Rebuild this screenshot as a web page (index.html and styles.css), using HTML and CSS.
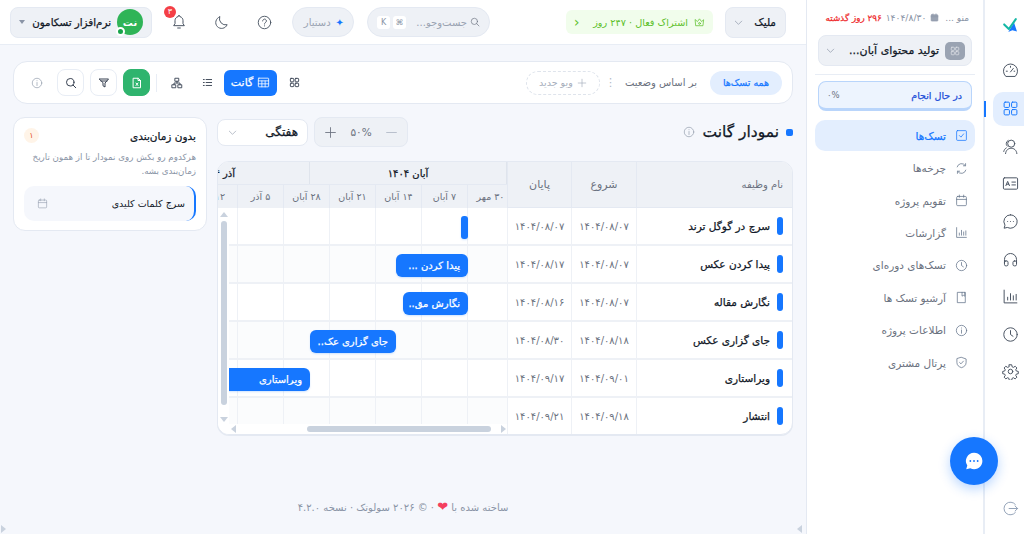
FILE: index.html
```html
<!DOCTYPE html>
<html lang="fa" dir="rtl">
<head>
<meta charset="utf-8">
<title>نمودار گانت</title>
<link rel="stylesheet" href="styles.css">
</head>
<body>
<svg class="defs" width="0" height="0" aria-hidden="true">
  <symbol id="i-grid" viewBox="0 0 24 24"><rect x="3" y="3" width="7.5" height="7.5" rx="1.5"/><rect x="13.5" y="3" width="7.5" height="7.5" rx="1.5"/><rect x="3" y="13.5" width="7.5" height="7.5" rx="1.5"/><rect x="13.5" y="13.5" width="7.5" height="7.5" rx="1.5"/></symbol>
  <symbol id="i-gauge" viewBox="0 0 24 24"><path d="M5 20a10 10 0 1 1 14 0z"/><path d="M12 14l4-5M6 13h1.500M17 13h1M12 6v1.500"/></symbol>
  <symbol id="i-users" viewBox="0 0 24 24"><circle cx="13" cy="8" r="5"/><path d="M5 22c.5-5 4-7.500 8-7.500s7.500 2.500 8 7.500M8.500 3.500A5 5 0 0 0 6 8c0 1.500.5 2.500 1.500 3.500M6 14c-2 1-3 3-3.500 5"/></symbol>
  <symbol id="i-id" viewBox="0 0 24 24"><rect x="2" y="4" width="20" height="16" rx="1.500"/><path d="M5.500 15l2.500-6 2.500 6M6.500 13h3M14 10h5M14 14h5"/></symbol>
  <symbol id="i-chat" viewBox="0 0 24 24"><path d="M12 2.500a9.500 9.500 0 1 1-4.500 17.900L3 21.500l1.200-4.300A9.500 9.500 0 0 1 12 2.500z"/><path d="M8 12h.01M12 12h.01M16 12h.01"/></symbol>
  <symbol id="i-headset" viewBox="0 0 24 24"><path d="M3.500 17v-5a8.500 8.500 0 0 1 17 0v5"/><rect x="3.500" y="14" width="5" height="7" rx="2"/><rect x="15.500" y="14" width="5" height="7" rx="2"/></symbol>
  <symbol id="i-chart" viewBox="0 0 24 24"><path d="M3 3v18h18M8 17v-4M12 17V8M16 17v-6M20 17V9"/></symbol>
  <symbol id="i-clock" viewBox="0 0 24 24"><circle cx="12" cy="12" r="9.500"/><path d="M12 6.500V12l3.500 2.500"/></symbol>
  <symbol id="i-gear" viewBox="0 0 24 24"><circle cx="12" cy="12" r="3.200"/><path d="M10.300 2.500h3.400l.6 2.900 1.800.8 2.500-1.600 2.400 2.400-1.600 2.500.8 1.800 2.800.6v3.200l-2.800.6-.8 1.800 1.600 2.500-2.400 2.400-2.500-1.600-1.800.8-.6 2.800h-3.400l-.6-2.800-1.800-.8-2.500 1.600-2.400-2.400 1.600-2.500-.8-1.800-2.800-.6v-3.200l2.800-.6.8-1.800-1.600-2.500 2.400-2.400 2.500 1.600 1.800-.8z"/></symbol>
  <symbol id="i-logout" viewBox="0 0 24 24"><path d="M19 6.500A9 9 0 1 0 19 17.500M10 12h12M18.500 8.500L22 12l-3.500 3.500"/></symbol>
  <symbol id="i-check" viewBox="0 0 24 24"><rect x="3" y="3" width="18" height="18" rx="1.500"/><path d="M8 12l3 3 5-6"/></symbol>
  <symbol id="i-cycle" viewBox="0 0 24 24"><path d="M4 9a8.500 8.500 0 0 1 15-2.500M20 15a8.500 8.500 0 0 1-15 2.500M19.500 3v4h-4M4.500 21v-4h4"/></symbol>
  <symbol id="i-cal" viewBox="0 0 24 24"><rect x="3" y="4.500" width="18" height="17" rx="2"/><path d="M3 10h18M8 2v4M16 2v4"/></symbol>
  <symbol id="i-book" viewBox="0 0 24 24"><path d="M5 2.500h14v19H5zM13 2.500v7l2.500-1.500L18 9.500v-7"/></symbol>
  <symbol id="i-info" viewBox="0 0 24 24"><circle cx="12" cy="12" r="9.500"/><path d="M12 11v6M12 7.300v.2"/></symbol>
  <symbol id="i-shield" viewBox="0 0 24 24"><path d="M12 2.500l8.500 3v6.500c0 5-3.500 8-8.500 9.500-5-1.500-8.500-4.500-8.500-9.500V5.500z"/><path d="M8.500 12l2.500 2.500 4.500-5"/></symbol>
  <symbol id="i-chev" viewBox="0 0 24 24"><path d="M5 9l7 7 7-7"/></symbol>
  <symbol id="i-crown" viewBox="0 0 24 24"><path d="M3 6l4.500 4L12 4l4.500 6L21 6l-1.500 13h-15z"/><circle cx="12" cy="14" r="2"/></symbol>
  <symbol id="i-search" viewBox="0 0 24 24"><circle cx="10.500" cy="10.500" r="7.500"/><path d="M16 16l5.500 5.500"/></symbol>
  <symbol id="i-help" viewBox="0 0 24 24"><circle cx="12" cy="12" r="10"/><path d="M9 9.500a3 3 0 1 1 4.500 2.600c-1 .6-1.500 1.200-1.500 2.400M12 17.300v.2"/></symbol>
  <symbol id="i-moon" viewBox="0 0 24 24"><path d="M9 3a9.500 9.500 0 1 0 12 12.500A10 10 0 0 1 9 3z"/></symbol>
  <symbol id="i-bell" viewBox="0 0 24 24"><path d="M12 2.500a1.500 1.500 0 0 1 1.500 1.500c3 .7 4.500 3.200 4.500 6v4.500l2 3H4l2-3V10c0-2.800 1.500-5.300 4.500-6A1.500 1.500 0 0 1 12 2.500zM10 21h4"/></symbol>
  <symbol id="i-filter" viewBox="0 0 24 24"><path d="M3 4h18l-7 8v8l-4-2.500V12zM6 8h12"/></symbol>
  <symbol id="i-file" viewBox="0 0 24 24"><path d="M5 2.500h9.500L19 7v14.500H5zM14 2.500V7h5M10 12l4 5M14 12l-4 5"/></symbol>
  <symbol id="i-tree" viewBox="0 0 24 24"><rect x="8.500" y="2.500" width="7" height="6"/><rect x="2.500" y="15.500" width="7" height="6"/><rect x="14.500" y="15.500" width="7" height="6"/><path d="M12 8.500V12M6 15.500V12h12v3.500"/></symbol>
  <symbol id="i-list" viewBox="0 0 24 24"><path d="M9 5.500h12M9 12h12M9 18.500h12M3 5.500h2M3 12h2M3 18.500h2"/></symbol>
  <symbol id="i-table" viewBox="0 0 24 24"><rect x="2.500" y="4" width="19" height="16" rx="1"/><path d="M2.500 9h19M2.500 14.500h19M9 9v11M15 9v11"/></symbol>
  <symbol id="i-plus" viewBox="0 0 24 24"><path d="M12 3v18M3 12h18"/></symbol>
  <symbol id="i-minus" viewBox="0 0 24 24"><path d="M3 12h18"/></symbol>
</svg>

<nav class="rail">
  <svg class="logo" viewBox="0 0 24 24" aria-hidden="true"><path class="logo-b" d="M9 24l10-16 5 15-8-2z"/><path class="logo-a" d="M2 11l8 8L22 2"/></svg>
  <a class="rail-btn"><svg class="ic"><use href="#i-gauge"/></svg></a>
  <a class="rail-btn rail-active"><svg class="ic"><use href="#i-grid"/></svg></a>
  <a class="rail-btn"><svg class="ic"><use href="#i-users"/></svg></a>
  <a class="rail-btn"><svg class="ic"><use href="#i-id"/></svg></a>
  <a class="rail-btn"><svg class="ic"><use href="#i-chat"/></svg></a>
  <a class="rail-btn"><svg class="ic"><use href="#i-headset"/></svg></a>
  <a class="rail-btn"><svg class="ic"><use href="#i-chart"/></svg></a>
  <a class="rail-btn"><svg class="ic"><use href="#i-clock"/></svg></a>
  <a class="rail-btn"><svg class="ic"><use href="#i-gear"/></svg></a>
  <a class="rail-btn rail-logout"><svg class="ic"><use href="#i-logout"/></svg></a>
</nav>

<aside class="sidebar">
  <div class="side-top">
    <span class="side-menu">منو ...</span>
    <svg class="ic ic-date"><use href="#i-cal"/></svg>
    <span class="side-date">۱۴۰۴/۸/۳۰</span>
    <span class="side-late">۲۹۶ روز گذشته</span>
  </div>
  <div class="project">
    <span class="project-icon"><svg class="ic"><use href="#i-grid"/></svg></span>
    <span class="project-name">تولید محتوای آبان...</span>
    <svg class="ic ic-chev"><use href="#i-chev"/></svg>
  </div>
  <hr class="side-rule">
  <div class="status"><span>در حال انجام</span><span class="status-pct">۰%</span></div>
  <ul class="menu">
    <li class="menu-item menu-active"><svg class="ic"><use href="#i-check"/></svg>تسک‌ها</li>
    <li class="menu-item"><svg class="ic"><use href="#i-cycle"/></svg>چرخه‌ها</li>
    <li class="menu-item"><svg class="ic"><use href="#i-cal"/></svg>تقویم پروژه</li>
    <li class="menu-item"><svg class="ic"><use href="#i-chart"/></svg>گزارشات</li>
    <li class="menu-item"><svg class="ic"><use href="#i-clock"/></svg>تسک‌های دوره‌ای</li>
    <li class="menu-item"><svg class="ic"><use href="#i-book"/></svg>آرشیو تسک ها</li>
    <li class="menu-item"><svg class="ic"><use href="#i-info"/></svg>اطلاعات پروژه</li>
    <li class="menu-item"><svg class="ic"><use href="#i-shield"/></svg>پرتال مشتری</li>
  </ul>
</aside>

<button class="fab" aria-label="گفتگو"><svg viewBox="0 0 24 24" aria-hidden="true"><path class="fab-bubble" d="M12 3a9 9 0 1 1-4 17l-4.500 1 1.200-4A9 9 0 0 1 12 3z"/><path class="fab-dots" d="M8 12h.01M12 12h.01M16 12h.01"/></svg></button>

<main class="main">
  <header class="topbar">
    <div class="top-group">
      <div class="workspace">ملیک<svg class="ic ic-chev"><use href="#i-chev"/></svg></div>
      <div class="sub">
        <svg class="ic"><use href="#i-crown"/></svg>
        <span>اشتراک فعال · ۲۴۷ روز</span>
        <span class="sub-arrow">›</span>
      </div>
    </div>
    <div class="top-group top-left">
      <div class="search">
        <svg class="ic"><use href="#i-search"/></svg>
        <span class="search-text">جست‌وجو...</span>
        <kbd class="key">⌘</kbd><kbd class="key">K</kbd>
      </div>
      <div class="assistant"><span class="spark">✦</span>دستیار</div>
      <svg class="ic top-icon"><use href="#i-help"/></svg>
      <svg class="ic top-icon"><use href="#i-moon"/></svg>
      <div class="bell"><svg class="ic top-icon"><use href="#i-bell"/></svg><span class="bell-badge">۳</span></div>
      <div class="profile">
        <span class="avatar">نت<i class="avatar-dot"></i></span>
        <span class="profile-name">نرم‌افزار تسکامون</span>
        <span class="caret"></span>
      </div>
    </div>
  </header>

  <section class="content">
    <div class="toolbar">
      <div class="tool-group">
        <span class="pill-active">همه تسک‌ها</span>
        <span class="tool-label">بر اساس وضعیت</span>
        <span class="kebab">⋮</span>
        <span class="pill-new"><svg class="ic"><use href="#i-plus"/></svg>ویو جدید</span>
      </div>
      <div class="tool-group tool-views">
        <svg class="ic view"><use href="#i-grid"/></svg>
        <span class="view-active"><svg class="ic"><use href="#i-table"/></svg>گانت</span>
        <svg class="ic view"><use href="#i-list"/></svg>
        <svg class="ic view"><use href="#i-tree"/></svg>
        <i class="tool-sep"></i>
        <span class="tool-btn tool-green"><svg class="ic"><use href="#i-file"/></svg></span>
        <span class="tool-btn"><svg class="ic"><use href="#i-filter"/></svg></span>
        <span class="tool-btn"><svg class="ic"><use href="#i-search"/></svg></span>
        <svg class="ic tool-info"><use href="#i-info"/></svg>
      </div>
    </div>

    <div class="work">
      <div class="gantt-col">
        <div class="title-row">
          <div class="title"><i class="title-mark"></i><h1>نمودار گانت</h1><svg class="ic"><use href="#i-info"/></svg></div>
          <div class="controls">
            <div class="zoom-ctl"><svg class="ic"><use href="#i-minus"/></svg><span>۵۰%</span><svg class="ic"><use href="#i-plus"/></svg></div>
            <div class="select"><span>هفتگی</span><svg class="ic"><use href="#i-chev"/></svg></div>
          </div>
        </div>

        <div class="gantt">
          <div class="cols">
            <div class="row head"><div class="name">نام وظیفه</div><div class="date">شروع</div><div class="date">پایان</div></div>
            <div class="row"><div class="name"><i class="mark"></i>سرچ در گوگل ترند</div><div class="date">۱۴۰۴/۰۸/۰۷</div><div class="date">۱۴۰۴/۰۸/۰۷</div></div>
            <div class="row"><div class="name"><i class="mark"></i>پیدا کردن عکس</div><div class="date">۱۴۰۴/۰۸/۰۷</div><div class="date">۱۴۰۴/۰۸/۱۷</div></div>
            <div class="row"><div class="name"><i class="mark"></i>نگارش مقاله</div><div class="date">۱۴۰۴/۰۸/۰۷</div><div class="date">۱۴۰۴/۰۸/۱۶</div></div>
            <div class="row"><div class="name"><i class="mark"></i>جای گزاری عکس</div><div class="date">۱۴۰۴/۰۸/۱۸</div><div class="date">۱۴۰۴/۰۸/۳۰</div></div>
            <div class="row"><div class="name"><i class="mark"></i>ویراستاری</div><div class="date">۱۴۰۴/۰۹/۰۱</div><div class="date">۱۴۰۴/۰۹/۱۷</div></div>
            <div class="row row-last"><div class="name"><i class="mark"></i>انتشار</div><div class="date">۱۴۰۴/۰۹/۱۸</div><div class="date">۱۴۰۴/۰۹/۲۱</div></div>
          </div>
          <div class="timeline">
            <div class="months">
              <div class="month month-aban">آبان ۱۴۰۴</div>
              <div class="month month-azar">آذر ۱۴۰۴</div>
            </div>
            <div class="weeks tl-grid">
              <div class="week-first">۳۰ مهر</div><div>۷ آبان</div><div>۱۴ آبان</div><div>۲۱ آبان</div><div>۲۸ آبان</div><div>۵ آذر</div><div class="week-clip">۱۲ آذر</div>
            </div>
            <div class="tl-row tl-grid"><i></i><i></i><i></i><i></i><i></i><i></i><i></i><span class="bar bar-dot" style="right:39px;width:7px"></span></div>
            <div class="tl-row tl-grid tl-alt"><i></i><i></i><i></i><i></i><i></i><i></i><i></i><span class="bar" style="right:39px;width:72px">پیدا کردن ...</span></div>
            <div class="tl-row tl-grid"><i></i><i></i><i></i><i></i><i></i><i></i><i></i><span class="bar" style="right:39px;width:65px">نگارش مق..</span></div>
            <div class="tl-row tl-grid tl-alt"><i></i><i></i><i></i><i></i><i></i><i></i><i></i><span class="bar" style="right:111px;width:86px">جای گزاری عک..</span></div>
            <div class="tl-row tl-grid"><i></i><i></i><i></i><i></i><i></i><i></i><i></i><span class="bar bar-open" style="right:197px;width:82px">ویراستاری</span></div>
            <div class="tl-row tl-grid tl-alt tl-last"><i></i><i></i><i></i><i></i><i></i><i></i><i></i></div>
            <div class="vbar"><b class="arr arr-up"></b><i class="vthumb"></i><b class="arr arr-down"></b></div>
            <div class="hbar"><b class="arr arr-end"></b><i class="hthumb"></i><b class="arr arr-start"></b></div>
          </div>
        </div>
      </div>

      <aside class="panel">
        <div class="panel-head"><strong>بدون زمان‌بندی</strong><span class="panel-count">۱</span></div>
        <p class="panel-text">هرکدوم رو بکش روی نمودار تا از همون تاریخ زمان‌بندی بشه.</p>
        <div class="panel-item"><span>سرچ کلمات کلیدی</span><svg class="ic"><use href="#i-cal"/></svg></div>
      </aside>
    </div>

    <footer class="foot">ساخته شده با <span class="heart">❤</span> · © ۲۰۲۶ سولوتک · نسخه ۴.۲.۰</footer>
  </section>
  <b class="page-arrow page-arrow-r"></b>
  <b class="page-arrow page-arrow-l"></b>
</main>
</body>
</html>
```
FILE: styles.css
```css
* { box-sizing: border-box; }
html, body { height: 100%; }
body {
  margin: 0;
  height: 534px;
  overflow: hidden;
  display: flex;
  background: #f5f7fc;
  color: #111827;
  font-family: "DejaVu Sans", sans-serif;
  font-size: 11px;
}
.defs { position: absolute; }
.ic {
  width: 16px;
  height: 16px;
  flex: none;
  fill: none;
  stroke: currentColor;
  stroke-width: 1.6;
  stroke-linecap: round;
  stroke-linejoin: round;
}

/* semi-bold look: the installed Arabic face only has regular and a very heavy bold */
.project, .workspace, .profile-name, .pill-active, .view-active, .title h1, .select,
.row .name, .month, .bar, .panel-head strong, .status, .menu-active, .side-late {
  font-weight: 400;
  -webkit-text-stroke: .25px currentColor;
}

/* rail */
.rail {
  width: 41px;
  flex: none;
  background: #fff;
  border-left: 2px solid #e8edf5;
  display: flex;
  flex-direction: column;
  align-items: flex-start;
  position: relative;
}
.logo { width: 14px; height: 14px; margin: 18px 7px 0 0; flex: none; overflow: visible; }
.logo-a { fill: none; stroke: #14b8a6; stroke-width: 3.5; stroke-linecap: round; stroke-linejoin: round; }
.logo-b { fill: #1677ff; }
.rail-btn {
  width: 31px;
  height: 37.600px;
  display: flex;
  align-items: center;
  justify-content: center;
  color: #4b5563;
  padding-left: 3px;
}
.rail-btn:nth-of-type(1) { margin-top: 20px; }
.rail-btn .ic { width: 17px; height: 17px; stroke-width: 1.4; }
.rail-active {
  background: #e3eefe;
  color: #1677ff;
  border-radius: 10px 0 0 10px;
  position: relative;
  height: 34px;
  margin: 2px 0;
}
.rail-active::after {
  content: "";
  position: absolute;
  right: 38px;
  top: 9px;
  width: 2px;
  height: 16px;
  background: #1677ff;
}
.rail-logout { margin-top: auto; margin-bottom: 7px; color: #94a3b8; }

/* sidebar */
.sidebar {
  width: 177px;
  flex: none;
  background: #fff;
  border-left: 1px solid #e4e9f2;
  padding: 0 8px;
  display: flex;
  flex-direction: column;
}
.side-top {
  height: 35px;
  display: flex;
  align-items: center;
  gap: 4px;
  padding: 0 6px 0 0;
  font-size: 8.500px;
  color: #8a94a6;
  white-space: nowrap;
}
.side-menu { font-size: 9px; }
.ic-date { width: 9px; height: 9px; margin-right: 2px; fill: #9aa3b2; }
.side-late { color: #ef2b2d; font-size: 8.800px; }
.side-date { font-size: 9.200px; }
.project {
  height: 31px;
  margin: 0 3px;
  display: flex;
  align-items: center;
  gap: 6px;
  padding: 0 6px;
  background: #eef1f6;
  border: 1px solid #e4e9f2;
  border-radius: 8px;
  font-size: 11px;
  white-space: nowrap;
}
.project-icon {
  width: 20px;
  height: 18px;
  background: #9aa3b2;
  border-radius: 5px;
  color: #e5e7eb;
  display: grid;
  place-items: center;
}
.project-icon .ic { width: 10px; height: 10px; }
.project-name { flex: 1; }
.ic-chev { width: 11px; height: 11px; color: #8a94a6; stroke-width: 1.5; }
.side-rule { border: 0; border-top: 1px solid #e8edf5; margin: 8px 0 6px; width: 100%; }
.status {
  height: 30px;
  margin: 0 3px;
  padding: 0 9px 0 8px;
  display: flex;
  justify-content: space-between;
  align-items: center;
  background: #edf4fe;
  border: 1px solid #b9d5fb;
  border-bottom: 3px solid #b9d5fb;
  border-radius: 8px;
  color: #1d4ed8;
  font-size: 9.500px;
}
.status-pct { color: #6b7280; font-size: 8.500px; -webkit-text-stroke: 0; }
.menu { list-style: none; margin: 9px 0 0; padding: 0; }
.menu-item {
  height: 32.400px;
  display: flex;
  align-items: center;
  gap: 9px;
  padding: 0 7px;
  color: #6b7280;
  font-size: 10.500px;
  border-radius: 10px;
  white-space: nowrap;
}
.menu-item .ic { width: 13px; height: 13px; stroke-width: 1.4; color: #64748b; }
.menu-active { background: #e3eefe; color: #1677ff; height: 31px; margin-bottom: 1px; }
.menu-active .ic { color: #1677ff; }

.fab {
  position: absolute;
  left: 950px;
  top: 437px;
  width: 48px;
  height: 48px;
  padding: 13px;
  border: 0;
  border-radius: 50%;
  background: #1677ff;
  box-shadow: 0 4px 12px rgba(22, 119, 255, .3);
}
.fab svg { display: block; width: 22px; height: 22px; }
.fab-bubble { fill: #fff; }
.fab-dots { fill: none; stroke: #1677ff; stroke-width: 2; stroke-linecap: round; }

/* main */
.main { flex: 1; min-width: 0; display: flex; flex-direction: column; position: relative; }
.topbar {
  height: 45px;
  flex: none;
  background: #fff;
  border-bottom: 1px solid #e8edf5;
  padding: 0 20px 0 10px;
  display: flex;
  justify-content: space-between;
  align-items: center;
}
.top-group { display: flex; align-items: center; gap: 12px; }
.workspace {
  width: 61px;
  height: 31px;
  display: flex;
  align-items: center;
  justify-content: space-between;
  padding: 0 9px 0 7px;
  background: #eef1f6;
  border: 1px solid #e4e9f2;
  border-radius: 8px;
  font-size: 10.500px;
}
.sub {
  width: 147px;
  height: 24px;
  display: flex;
  align-items: center;
  gap: 6px;
  padding: 0 8px;
  background: #f1fdec;
  border-radius: 6px;
  color: #5cc02a;
  font-size: 9.700px;
  white-space: nowrap;
}
.sub .ic { width: 11px; height: 11px; }
.sub-arrow { margin-right: auto; font-size: 14px; line-height: 1; transform: scaleX(-1); }
.top-left { gap: 0; }
.search {
  width: 123px;
  height: 30px;
  display: flex;
  align-items: center;
  gap: 3px;
  padding: 0 9px;
  background: #eef1f6;
  border: 1px solid #e4e9f2;
  border-radius: 15px;
  color: #9aa3b2;
  font-size: 10px;
  white-space: nowrap;
}
.search .ic { width: 10px; height: 10px; color: #6b7280; }
.search-text { flex: 1; }
.key {
  width: 13px;
  height: 13px;
  display: grid;
  place-items: center;
  background: #fff;
  border-radius: 3px;
  font: 8px "DejaVu Sans", sans-serif;
  color: #8a94a6;
}
.assistant {
  width: 62px;
  height: 30px;
  margin-right: 13px;
  display: flex;
  align-items: center;
  gap: 5px;
  padding: 0 9px;
  background: #eef1f6;
  border: 1px solid #e4e9f2;
  border-radius: 15px;
  color: #9aa3b2;
  font-size: 10px;
}
.spark { color: #1677ff; font-size: 10px; }
.top-icon { width: 15px; height: 15px; color: #4b5563; stroke-width: 1.5; }
.assistant + .top-icon { margin-right: 20px; }
.top-icon + .top-icon { margin-right: 28px; }
.bell { position: relative; margin-right: 27px; height: 16px; }
.bell .top-icon { width: 16px; height: 16px; display: block; }
.bell-badge {
  position: absolute;
  right: 11px;
  top: -8px;
  width: 12px;
  height: 12px;
  border-radius: 50%;
  background: #f43f46;
  color: #fff;
  font-size: 8px;
  line-height: 12px;
  text-align: center;
}
.profile {
  width: 142px;
  height: 31px;
  margin-right: 19px;
  display: flex;
  align-items: center;
  gap: 6px;
  padding: 0 8px 0 8px;
  background: #eef1f6;
  border: 1px solid #e4e9f2;
  border-radius: 8px;
  white-space: nowrap;
}
.avatar {
  width: 26px;
  height: 26px;
  border-radius: 50%;
  background: #2fb457;
  color: #fff;
  font-size: 10px;
  font-weight: 700;
  display: grid;
  place-items: center;
  position: relative;
  flex: none;
}
.avatar-dot {
  position: absolute;
  left: -1px;
  bottom: -1px;
  width: 9px;
  height: 9px;
  border-radius: 50%;
  background: #16a34a;
  border: 2px solid #fff;
}
.profile-name { flex: 1; font-size: 10.300px; }
.caret { width: 0; height: 0; border: 3px solid transparent; border-top: 4px solid #8a94a6; border-bottom: 0; }

.content { flex: 1; padding: 16px 13px 0; display: flex; flex-direction: column; }
.toolbar {
  height: 43px;
  flex: none;
  display: flex;
  justify-content: space-between;
  align-items: center;
  padding: 0 10px 0 17px;
  background: #fff;
  border: 1px solid #e4e9f2;
  border-radius: 14px;
}
.tool-group { display: flex; align-items: center; }
.pill-active {
  width: 72px;
  height: 24px;
  border-radius: 12px;
  background: #e3eefe;
  color: #1677ff;
  font-size: 9.500px;
  display: grid;
  place-items: center;
  white-space: nowrap;
}
.tool-label { margin-right: 13px; color: #6b7280; font-size: 10px; white-space: nowrap; }
.kebab { margin: 0 9px 0 5px; color: #b0b8c6; font-size: 11px; }
.pill-new {
  width: 74px;
  height: 24px;
  display: flex;
  align-items: center;
  justify-content: center;
  gap: 4px;
  border: 1px dashed #dfe4ec;
  border-radius: 12px;
  color: #a5adbb;
  font-size: 9.500px;
  white-space: nowrap;
}
.pill-new .ic { width: 10px; height: 10px; }
.view { width: 11px; height: 11px; color: #374151; stroke-width: 2; }
.view-active {
  width: 53px;
  height: 26px;
  margin: 0 12px 0 11px;
  display: flex;
  align-items: center;
  justify-content: center;
  gap: 4px;
  background: #1677ff;
  color: #fff;
  border-radius: 6px;
  font-size: 11px;
}
.view-active .ic { width: 13px; height: 13px; stroke-width: 1.5; -webkit-text-stroke: 0; }
.view + .view { margin-right: 19px; width: 12px; height: 12px; stroke-width: 1.8; }
.tool-sep { width: 1px; height: 18px; margin: 0 14px 0 6px; background: #e8edf5; }
.tool-btn {
  width: 27px;
  height: 27px;
  margin-left: 6px;
  display: grid;
  place-items: center;
  background: #fff;
  border: 1px solid #e8edf5;
  border-radius: 8px;
  color: #374151;
}
.tool-btn .ic { width: 12px; height: 12px; stroke-width: 2; }
.tool-green { background: #2fb46e; border-color: #2fb46e; color: #fff; }
.tool-info { width: 12px; height: 12px; margin-right: 8px; color: #9aa3b2; stroke-width: 1.5; }

.work { flex: 1; min-height: 0; display: flex; gap: 10px; margin-top: 13px; align-items: flex-start; }
.gantt-col { width: 576px; flex: none; }
.title-row { height: 44px; display: flex; justify-content: space-between; align-items: flex-start; }
.title { display: flex; align-items: center; gap: 7px; height: 30px; }
.title-mark { width: 7px; height: 7px; background: #1677ff; border-radius: 2px; }
.title h1 { margin: 0; font-size: 15.500px; white-space: nowrap; }
.title .ic { width: 12px; height: 12px; color: #9aa3b2; stroke-width: 1.5; }
.controls { display: flex; align-items: center; gap: 6px; height: 30px; }
.zoom-ctl {
  width: 94px;
  height: 30px;
  display: flex;
  align-items: center;
  justify-content: space-between;
  padding: 0 9px;
  background: #eef1f6;
  border: 1px solid #e4e9f2;
  border-radius: 8px;
  color: #6b7280;
  font-size: 10.500px;
}
.zoom-ctl .ic { width: 13px; height: 13px; }
.zoom-ctl .ic:first-child { color: #b0b8c6; }
.select {
  width: 91px;
  height: 27px;
  display: flex;
  align-items: center;
  justify-content: space-between;
  padding: 0 9px;
  background: #fff;
  border: 1px solid #e4e9f2;
  border-radius: 8px;
  font-size: 12px;
}
.select .ic { width: 11px; height: 11px; color: #8a94a6; stroke-width: 1.3; }

.gantt {
  height: 274px;
  display: flex;
  background: #fff;
  border: 1px solid #e4e9f2;
  border-radius: 12px;
  overflow: hidden;
  box-shadow: 0 1px 0 #e4e9f2;
}
.cols { width: 285px; flex: none; display: flex; flex-direction: column; }
.row {
  display: grid;
  grid-template-columns: 156px 65px 64px;
  height: 38px;
  flex: none;
  border-bottom: 2px solid #eef1f6;
}
.row > div { display: flex; align-items: center; min-width: 0; }
.row-last { border-bottom: 0; height: 36px; }
.head { height: 46px; background: #eef1f6; color: #6b7280; border-bottom: 1px solid #e4e9f2; }
.row .name { padding-right: 9px; gap: 7px; font-size: 10.500px; white-space: nowrap; border-left: 1px solid #eef1f6; }
.head .name { padding-right: 9px; font-size: 10px; border-left-color: #e4e9f2; -webkit-text-stroke: 0; }
.date { justify-content: center; color: #6b7280; font-size: 10px; border-left: 1px solid #eef1f6; }
.head .date { font-size: 11px; border-left-color: #e4e9f2; }
.mark { width: 6px; height: 18px; flex: none; border-radius: 3px; background: #1677ff; }

.timeline { flex: 1; min-width: 0; position: relative; overflow: hidden; }
.months { display: flex; height: 23px; background: #eef1f6; border-bottom: 1px solid #e4e9f2; font-size: 10px; }
.month { display: flex; align-items: center; white-space: nowrap; overflow: hidden; flex: none; }
.month-aban { width: 198px; justify-content: center; border-right: 1px solid #dfe4ec; border-left: 1px solid #dfe4ec; }
.month-azar { flex: 1; min-width: 0; padding-right: 74px; }
.tl-grid { display: grid; grid-template-columns: 40px repeat(5, 46px) 1fr; }
.weeks { height: 23px; background: #eef1f6; color: #6b7280; font-size: 9.500px; white-space: nowrap; }
.weeks > div { display: flex; align-items: center; justify-content: center; border-left: 1px solid #e4e9f2; overflow: hidden; }
.weeks > .week-first { padding-left: 6px; }
.weeks > .week-clip { justify-content: flex-start; padding-right: 12px; border-left: 0; }
.tl-row {
  height: 38px;
  position: relative;
  border-bottom: 2px solid #eef1f6;
}
.tl-row > i { border-left: 1px solid #eef1f6; display: block; }
.tl-row > i:last-of-type { border-left: 0; }
.tl-alt { background: #fbfcfd; }
.tl-last { height: 26px; border-bottom: 0; }
.bar {
  position: absolute;
  top: 8px;
  height: 23px;
  padding: 0 8px;
  display: flex;
  align-items: center;
  overflow: hidden;
  background: #1677ff;
  color: #fff;
  font-size: 10px;
  white-space: nowrap;
  border-radius: 6px;
  box-shadow: 0 1px 2px rgba(22, 119, 255, .2);
}
.bar-dot { padding: 0; border-radius: 3px; }
.bar-open { border-top-left-radius: 0; border-bottom-left-radius: 0; }
.vbar {
  position: absolute;
  left: 0;
  top: 46px;
  width: 11px;
  bottom: 10px;
  background: #fff;
  display: flex;
  flex-direction: column;
  align-items: center;
  padding-top: 4px;
}
.vthumb { width: 6px; height: 184px; margin: 4px 0 12px; border-radius: 3px; background: #c9d2de; }
.hbar {
  position: absolute;
  left: 0;
  right: 0;
  bottom: 0;
  height: 10px;
  background: #fff;
  display: flex;
  align-items: center;
}
.hthumb { position: absolute; left: 89px; width: 184px; height: 6px; border-radius: 3px; background: #c9d2de; }
.arr { width: 0; height: 0; border: 4px solid transparent; display: block; }
.arr-up { border-top: 0; border-bottom: 5px solid #c9d2de; }
.arr-down { border-bottom: 0; border-top: 5px solid #c9d2de; }
.arr-end { border-right: 0; border-left: 5px solid #c9d2de; margin-right: 1px; }
.arr-start { border-left: 0; border-right: 5px solid #c9d2de; margin-right: auto; margin-left: 13px; }

.panel {
  width: 194px;
  flex: none;
  height: 114px;
  padding: 10px 10px 0;
  background: #fff;
  border: 1px solid #e4e9f2;
  border-radius: 12px;
}
.panel-head { display: flex; justify-content: space-between; align-items: center; height: 15px; }
.panel-head strong { font-size: 10.500px; white-space: nowrap; }
.panel-count {
  width: 15px;
  height: 15px;
  border-radius: 50%;
  background: #fff4e8;
  color: #e4572e;
  font-size: 8px;
  display: grid;
  place-items: center;
}
.panel-text { margin: 7px 0 8px; color: #8a94a6; font-size: 8.700px; line-height: 14px; }
.panel-item {
  height: 35px;
  display: flex;
  justify-content: space-between;
  align-items: center;
  padding: 0 9px 0 13px;
  background: #f5f7fc;
  border-right: 2px solid #1677ff;
  border-radius: 10px;
  font-size: 9.500px;
  white-space: nowrap;
}
.panel-item .ic { width: 11px; height: 11px; color: #9aa3b2; stroke-width: 1.4; }

.foot { margin-top: auto; padding-bottom: 21px; text-align: center; color: #8a94a6; font-size: 10px; white-space: nowrap; }
.heart { color: #f43f5e; font-size: 13px; line-height: 1; }
.page-arrow { position: absolute; bottom: 1px; width: 0; height: 0; border: 4px solid transparent; }
.page-arrow-r { right: 4px; border-right: 0; border-left: 5px solid #c9d2de; transform: scaleX(-1); }
.page-arrow-l { left: 1px; border-left: 0; border-right: 5px solid #c9d2de; transform: scaleX(-1); }
```
